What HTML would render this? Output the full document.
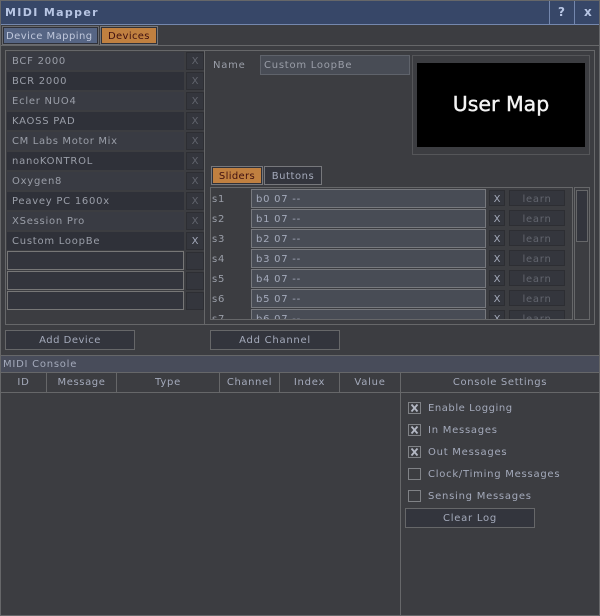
<!DOCTYPE html>
<html><head><meta charset="utf-8"><style>
html,body{margin:0;padding:0;background:#3c3d41}
#w{position:relative;width:600px;height:616px;overflow:hidden;background:#3c3d41;font-family:"DejaVu Sans",sans-serif;font-size:10px;letter-spacing:.75px;color:#a4aabb}
#w div{position:absolute;box-sizing:border-box;white-space:nowrap}
.t{line-height:20px;height:18px}
.l{background:#666769}
.r1,.r2{left:7px;width:177px;height:18px;line-height:20px;padding-left:5px;color:#9a9ea8}
.r1{background:#393b43}.r2{background:#2f3139}
.xb{left:186px;width:18px;height:18px;background:#34363d;border:1px solid #2d2e33;text-align:center;line-height:18px;color:#62656e;letter-spacing:0}
.e{left:7px;width:177px;height:19px;background:#33353d;border:1px solid #777}
.s{left:212px;line-height:20px;height:18px;color:#9a9ea8}
.f{left:251px;width:235px;height:19px;background:#484c55;border:1px solid #77797e;line-height:19px;padding-left:4px;color:#a4aabb}
.x2{left:489px;width:16px;height:16px;background:#34363d;border:1px solid #2d2e33;text-align:center;line-height:17px;color:#a4aabb;letter-spacing:0}
.ln{left:509px;width:56px;height:16px;background:#34363d;border:1px solid #2d2e33;text-align:center;line-height:17px;color:#62656e}
.b{height:20px;background:#33353d;border:1px solid #666769;text-align:center;line-height:19px;color:#a4aabb}
.h{top:373px;height:19px;line-height:20px;text-align:center;color:#a4aabb}
.c{left:408px;width:13px;height:12px;border:1px solid #808286}
.c svg{display:block}
.cl{left:428px;line-height:16px;height:14px}
</style></head><body><div id="w">
<!-- outer -->
<div class="l" style="left:0;top:0;width:600px;height:1px"></div>
<div class="l" style="left:0;top:0;width:1px;height:616px"></div>
<div class="l" style="left:599px;top:0;width:1px;height:616px"></div>
<div class="l" style="left:0;top:615px;width:600px;height:1px"></div>
<!-- title -->
<div style="left:1px;top:1px;width:598px;height:23px;background:#374768"></div>
<div style="left:1px;top:24px;width:598px;height:1px;background:#7487ad"></div>
<div style="left:549px;top:1px;width:1px;height:23px;background:#7487ad"></div>
<div style="left:574px;top:1px;width:1px;height:23px;background:#7487ad"></div>
<div style="left:5px;top:4px;height:18px;line-height:18px;font-weight:bold;font-size:11px;letter-spacing:1.35px;color:#b8c6e4">MIDI Mapper</div>
<div style="left:558px;top:3px;height:18px;line-height:18px;font-weight:bold;font-size:12px;letter-spacing:0;color:#b8c6e4">?</div>
<div style="left:584px;top:3px;height:18px;line-height:18px;font-weight:bold;font-size:12px;letter-spacing:0;color:#b8c6e4">x</div>
<!-- tabs -->
<div style="left:2px;top:26px;width:97px;height:19px;border:1px solid #6b6c70;background:#566584"></div>
<div style="left:3px;top:27px;width:95px;height:17px;border:1px solid #2f3139;background:#566584;line-height:17px;padding-left:2px;letter-spacing:.45px;color:#c0c8dc">Device Mapping</div>
<div style="left:100px;top:26px;width:58px;height:19px;border:1px solid #77787c;background:#c08040"></div>
<div style="left:101px;top:27px;width:56px;height:17px;border:1px solid #2f3139;background:#c08040;line-height:17px;padding-left:6px;letter-spacing:.35px;color:#401010">Devices</div>
<div class="l" style="left:0;top:45px;width:600px;height:1px"></div>
<!-- panel -->
<div style="left:5px;top:50px;width:590px;height:275px;border:1px solid #666769"></div>
<div class="l" style="left:204px;top:50px;width:1px;height:275px"></div>
<div class="r1" style="top:52px">BCF 2000</div><div class="xb" style="top:52px">X</div>
<div class="r2" style="top:72px">BCR 2000</div><div class="xb" style="top:72px">X</div>
<div class="r1" style="top:92px">Ecler NUO4</div><div class="xb" style="top:92px">X</div>
<div class="r2" style="top:112px">KAOSS PAD</div><div class="xb" style="top:112px">X</div>
<div class="r1" style="top:132px;letter-spacing:.65px">CM Labs Motor Mix</div><div class="xb" style="top:132px">X</div>
<div class="r2" style="top:152px">nanoKONTROL</div><div class="xb" style="top:152px">X</div>
<div class="r1" style="top:172px">Oxygen8</div><div class="xb" style="top:172px">X</div>
<div class="r2" style="top:192px">Peavey PC 1600x</div><div class="xb" style="top:192px">X</div>
<div class="r1" style="top:212px">XSession Pro</div><div class="xb" style="top:212px">X</div>
<div class="r2" style="top:232px">Custom LoopBe</div><div class="xb" style="top:232px;color:#a4aabb">X</div>
<div class="e" style="top:251px"></div><div class="xb" style="top:252px"></div>
<div class="e" style="top:271px"></div><div class="xb" style="top:272px"></div>
<div class="e" style="top:291px"></div><div class="xb" style="top:292px"></div>
<!-- name / image -->
<div class="t" style="left:213px;top:56px;color:#9a9ea8">Name</div>
<div style="left:260px;top:55px;width:150px;height:20px;background:#484c55;border:1px solid #5f636b;line-height:19px;padding-left:3px;color:#9a9ea8">Custom LoopBe</div>
<div style="left:412px;top:55px;width:178px;height:100px;border:1px solid #555659"></div>
<div style="left:417px;top:63px;width:168px;height:84px;background:#000;color:#f4f4f4;text-align:center;font-size:20.5px;letter-spacing:0;line-height:83px;-webkit-text-stroke:.4px #f4f4f4">User Map</div>
<!-- sub tabs -->
<div style="left:211px;top:166px;width:52px;height:19px;border:1px solid #77787c;background:#c08040"></div>
<div style="left:212px;top:167px;width:50px;height:17px;border:1px solid #2f3139;background:#c08040;line-height:17px;text-align:center;letter-spacing:.35px;color:#401010">Sliders</div>
<div style="left:264px;top:166px;width:58px;height:19px;border:1px solid #77787c;background:#33353d;line-height:19px;text-align:center;letter-spacing:.55px;color:#a4aabb">Buttons</div>
<!-- channel list -->
<div style="left:210px;top:187px;width:363px;height:133px;border:1px solid #666769;overflow:hidden">
</div>
<div style="left:574px;top:187px;width:16px;height:133px;border:1px solid #666769"></div>
<div style="left:576px;top:190px;width:12px;height:52px;border:1px solid #666769;background:#33353d"></div>
<div class="s" style="top:190px">s1</div><div class="f" style="top:189px">b0 07 --</div><div class="x2" style="top:190px">X</div><div class="ln" style="top:190px">learn</div>
<div class="s" style="top:210px">s2</div><div class="f" style="top:209px">b1 07 --</div><div class="x2" style="top:210px">X</div><div class="ln" style="top:210px">learn</div>
<div class="s" style="top:230px">s3</div><div class="f" style="top:229px">b2 07 --</div><div class="x2" style="top:230px">X</div><div class="ln" style="top:230px">learn</div>
<div class="s" style="top:250px">s4</div><div class="f" style="top:249px">b3 07 --</div><div class="x2" style="top:250px">X</div><div class="ln" style="top:250px">learn</div>
<div class="s" style="top:270px">s5</div><div class="f" style="top:269px">b4 07 --</div><div class="x2" style="top:270px">X</div><div class="ln" style="top:270px">learn</div>
<div class="s" style="top:290px">s6</div><div class="f" style="top:289px">b5 07 --</div><div class="x2" style="top:290px">X</div><div class="ln" style="top:290px">learn</div>
<div style="left:211px;top:307px;width:361px;height:12px;overflow:hidden">
<div class="s" style="left:1px;top:3px">s7</div><div class="f" style="left:40px;top:2px">b6 07 --</div><div class="x2" style="left:278px;top:3px">X</div><div class="ln" style="left:298px;top:3px">learn</div>
</div>
<!-- add buttons -->
<div class="b" style="left:5px;top:330px;width:130px;letter-spacing:.5px">Add Device</div>
<div class="b" style="left:210px;top:330px;width:130px">Add Channel</div>
<!-- console -->
<div class="l" style="left:0;top:355px;width:600px;height:1px"></div>
<div style="left:1px;top:356px;width:598px;height:16px;background:#484c5a;line-height:17px;padding-left:2px;color:#a4aabb">MIDI Console</div>
<div class="l" style="left:0;top:372px;width:600px;height:1px"></div>
<div class="l" style="left:0;top:392px;width:600px;height:1px"></div>
<div class="l" style="left:46px;top:373px;width:1px;height:19px"></div>
<div class="l" style="left:116px;top:373px;width:1px;height:19px"></div>
<div class="l" style="left:219px;top:373px;width:1px;height:19px"></div>
<div class="l" style="left:279px;top:373px;width:1px;height:19px"></div>
<div class="l" style="left:339px;top:373px;width:1px;height:19px"></div>
<div class="l" style="left:400px;top:373px;width:1px;height:243px"></div>
<div class="h" style="left:1px;width:45px">ID</div>
<div class="h" style="left:47px;width:69px;letter-spacing:.6px">Message</div>
<div class="h" style="left:117px;width:102px">Type</div>
<div class="h" style="left:220px;width:59px;letter-spacing:.6px">Channel</div>
<div class="h" style="left:280px;width:59px">Index</div>
<div class="h" style="left:340px;width:60px">Value</div>
<div class="h" style="left:401px;width:198px;letter-spacing:.65px">Console Settings</div>
<div class="c" style="top:402px"><svg width="11" height="10" viewBox="0 0 11 10"><path d="M2.5 1.5L8.5 8.5M8.5 1.5L2.5 8.5" stroke="#b4b8c4" stroke-width="1.8" fill="none"/></svg></div><div class="cl" style="top:401px;letter-spacing:.55px">Enable Logging</div>
<div class="c" style="top:424px"><svg width="11" height="10" viewBox="0 0 11 10"><path d="M2.5 1.5L8.5 8.5M8.5 1.5L2.5 8.5" stroke="#b4b8c4" stroke-width="1.8" fill="none"/></svg></div><div class="cl" style="top:423px">In Messages</div>
<div class="c" style="top:446px"><svg width="11" height="10" viewBox="0 0 11 10"><path d="M2.5 1.5L8.5 8.5M8.5 1.5L2.5 8.5" stroke="#b4b8c4" stroke-width="1.8" fill="none"/></svg></div><div class="cl" style="top:445px">Out Messages</div>
<div class="c" style="top:468px"></div><div class="cl" style="top:467px">Clock/Timing Messages</div>
<div class="c" style="top:490px"></div><div class="cl" style="top:489px">Sensing Messages</div>
<div class="b" style="left:405px;top:508px;width:130px">Clear Log</div>
</div></body></html>
